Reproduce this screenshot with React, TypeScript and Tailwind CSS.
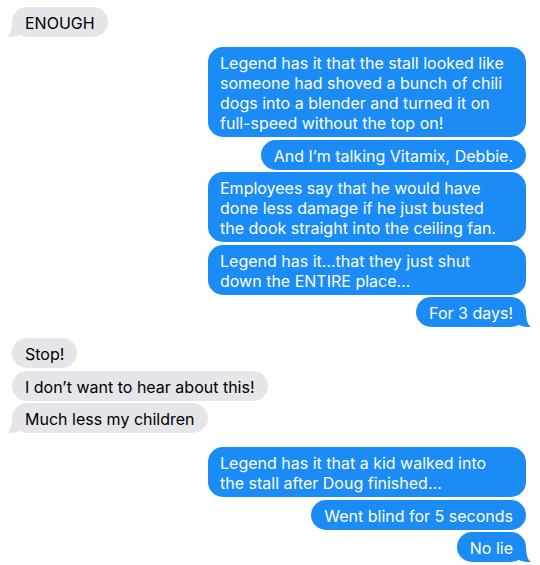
const groups = [
  {
    from: "them",
    mt: "mt-[7px]",
    messages: [["ENOUGH"]],
  },
  {
    from: "me",
    mt: "mt-[10px]",
    messages: [
      [
        "Legend has it that the stall looked like",
        "someone had shoved a bunch of chili",
        "dogs into a blender and turned it on",
        "full-speed without the top on!",
      ],
      ["And I\u2019m talking Vitamix, Debbie."],
      [
        "Employees say that he would have",
        "done less damage if he just busted",
        "the dook straight into the ceiling fan.",
      ],
      ["Legend has it\u2026that they just shut", "down the ENTIRE place\u2026"],
      ["For 3 days!"],
    ],
  },
  {
    from: "them",
    mt: "mt-[11px]",
    messages: [
      ["Stop!"],
      ["I don\u2019t want to hear about this!"],
      ["Much less my children"],
    ],
  },
  {
    from: "me",
    mt: "mt-[14px]",
    messages: [
      ["Legend has it that a kid walked into", "the stall after Doug finished\u2026"],
      ["Went blind for 5 seconds"],
      ["No lie"],
    ],
  },
];

function Tail({ side, color }: { side: "left" | "right"; color: string }) {
  if (side === "right") {
    return (
      <svg
        className="absolute bottom-0 right-[-5px]"
        width="16"
        height="16"
        viewBox="0 0 16 16"
      >
        <path d="M0 0 H11 C11 9 13 14 16 16 C10 16.5 5 15 1 12 Z" fill={color} />
      </svg>
    );
  }
  return (
    <svg
      className="absolute bottom-0 left-[-5px]"
      width="16"
      height="16"
      viewBox="0 0 16 16"
    >
      <path d="M16 0 H5 C5 9 3 14 0 16 C6 16.5 11 15 15 12 Z" fill={color} />
    </svg>
  );
}

function Bubble({
  lines,
  mine,
  tail,
}: {
  lines: string[];
  mine: boolean;
  tail: boolean;
}) {
  const multi = lines.length > 1;
  return (
    <div
      className={`relative rounded-[15px] pt-[6px] pb-[4px] text-[16px] leading-[20px] whitespace-nowrap ${
        multi ? "w-[318px] pl-[12px]" : "px-[13px]"
      } ${mine ? "self-end bg-[#1b8bf5] text-white" : "self-start bg-[#e5e5ea] text-black"}`}
    >
      {tail && (
        <Tail side={mine ? "right" : "left"} color={mine ? "#1b8bf5" : "#e5e5ea"} />
      )}
      <span className="relative">
        {lines.map((l, i) => (
          <div key={i}>{l}</div>
        ))}
      </span>
    </div>
  );
}

export default function App() {
  return (
    <div
      className="w-[540px] h-[565px] overflow-hidden bg-white pl-[12px] pr-[14px] flex flex-col"
      style={{ fontFamily: 'Inter, "Liberation Sans", sans-serif' }}
    >
      {groups.map((g, gi) => (
        <div key={gi} className={`flex flex-col gap-[2.5px] ${g.mt}`}>
          {g.messages.map((m, i) => (
            <Bubble
              key={i}
              lines={m}
              mine={g.from === "me"}
              tail={i === g.messages.length - 1}
            />
          ))}
        </div>
      ))}
    </div>
  );
}
